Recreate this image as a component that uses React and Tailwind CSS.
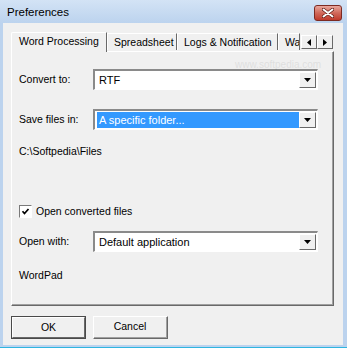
import React from "react";

const font = { fontFamily: '"Liberation Sans", Arial, sans-serif' };

function Arrow() {
  return (
    <svg width="7" height="4" viewBox="0 0 7 4">
      <path d="M0 0h7L3.5 4z" fill="#000" />
    </svg>
  );
}

function Combo({ text, selected }) {
  return (
    <div className="w-[225px] h-[21px] border-t-2 border-l-2 border-t-[#8a8a8a] border-l-[#8a8a8a] border-b border-r border-b-[#ffffff] border-r-[#ffffff] bg-white flex items-stretch p-[1px]">
      <div className="flex-1 flex items-center pl-[1px]">
        <div
          className={
            "h-[16px] w-full flex items-center pl-[2px] text-[11px] " +
            (selected ? "bg-[#3399ff] text-white" : "text-black")
          }
        >
          {text}
        </div>
      </div>
      <div className="w-[17px] bg-[#f0f0f0] border-t border-l border-t-[#ffffff] border-l-[#ffffff] border-b border-r border-b-[#696969] border-r-[#696969] flex items-center justify-center">
        <Arrow />
      </div>
    </div>
  );
}

function Button({ children, def }) {
  return (
    <div
      className={
        "w-[75px] h-[23px] flex " +
        (def ? "border border-[#4a4a4a]" : "border border-[#696969] border-t-[#ffffff] border-l-[#ffffff]")
      }
    >
      <div
        className={
          "flex-1 flex items-center justify-center text-[10.5px] text-black bg-[#f0f0f0] " +
          (def
            ? "border border-t-[#ffffff] border-l-[#ffffff] border-b-[#696969] border-r-[#696969]"
            : "border-b border-r border-b-[#a0a0a0] border-r-[#a0a0a0]")
        }
      >
        {children}
      </div>
    </div>
  );
}

function Tab({ children, w }) {
  return (
    <div
      className="h-[17px] flex items-center pl-[6px] pt-[1px] border-t border-l border-t-[#ffffff] border-l-[#ffffff] border-r border-r-[#696969] bg-[#f0f0f0] text-[10.5px] text-black whitespace-nowrap overflow-hidden"
      style={{ width: w }}
    >
      {children}
    </div>
  );
}

export default function App() {
  return (
    <div
      className="w-[347px] h-[348px] bg-[#bcd3ee] flex flex-col pl-[3px] pr-[4px] relative overflow-hidden"
      style={font}
    >
      {/* Title bar */}
      <div className="h-[23px] -ml-[3px] -mr-[4px] pl-[7px] pr-[5px] flex items-center justify-between bg-gradient-to-b from-[#d3e3f5] to-[#bcd3ee]">
        <span className="text-[11.5px] text-black mt-[3px]">Preferences</span>
        <div className="w-[28px] h-[16px] mt-[2px] rounded-[3px] border border-[#7c2a22] bg-gradient-to-b from-[#e9a79d] via-[#d0685a] to-[#c0392b] flex items-center justify-center">
          <svg width="12" height="10" viewBox="0 0 12 10">
            <path d="M1.5 1.5L10.5 8.5M10.5 1.5L1.5 8.5" stroke="#5a1a14" strokeWidth="3.4" strokeLinecap="round" />
            <path d="M1.5 1.5L10.5 8.5M10.5 1.5L1.5 8.5" stroke="#ffffff" strokeWidth="2" strokeLinecap="round" />
          </svg>
        </div>
      </div>

      {/* Client */}
      <div className="flex-1 bg-[#f0f0f0] flex flex-col pl-[8px] pr-[9px] pt-[9px] relative">
        {/* Tab strip */}
        <div className="h-[19px] flex items-end relative z-10">
          <div className="w-[96px] h-[20px] -mb-[1px] flex items-center pl-[7px] pb-[1px] border-t border-l border-t-[#ffffff] border-l-[#ffffff] border-r border-r-[#696969] bg-[#f0f0f0] text-[10.5px] text-black rounded-tl-[2px]">
            Word Processing
          </div>
          <div className="flex items-end mb-[1px]">
            <Tab w={70}>Spreadsheet</Tab>
            <Tab w={101}>Logs &amp; Notification</Tab>
            <Tab w={22}>Wa</Tab>
          </div>
          <div className="flex mb-[2px] ml-auto mr-[1px]">
            <div className="w-[16px] h-[14px] bg-[#f0f0f0] border border-t-[#ffffff] border-l-[#ffffff] border-b-[#696969] border-r-[#696969] flex items-center justify-center">
              <svg width="4" height="7" viewBox="0 0 4 7"><path d="M4 0v7L0 3.5z" fill="#000" /></svg>
            </div>
            <div className="w-[16px] h-[14px] bg-[#f0f0f0] border border-t-[#ffffff] border-l-[#ffffff] border-b-[#696969] border-r-[#696969] flex items-center justify-center">
              <svg width="4" height="7" viewBox="0 0 4 7"><path d="M0 0v7L4 3.5z" fill="#000" /></svg>
            </div>
          </div>
        </div>

        {/* Panel */}
        <div className="h-[255px] border-t border-l border-t-[#ffffff] border-l-[#ffffff] border-b border-r border-b-[#696969] border-r-[#696969] flex">
          <div className="flex-1 border-b border-r border-b-[#a0a0a0] border-r-[#a0a0a0] flex flex-col pl-[7px] pt-[17px] text-[10.5px] text-black">
            <div className="flex items-center h-[21px]">
              <span className="w-[74px]">Convert to:</span>
              <Combo text="RTF" />
            </div>
            <div className="flex items-center h-[21px] mt-[19px]">
              <span className="w-[74px]">Save files in:</span>
              <Combo text="A specific folder..." selected />
            </div>
            <div className="h-[14px] mt-[15px] flex items-center">C:\Softpedia\Files</div>
            <div className="flex items-center h-[13px] mt-[46px]">
              <div className="w-[13px] h-[13px] border border-t-[#7a7a7a] border-l-[#7a7a7a] border-b-[#ffffff] border-r-[#ffffff] bg-white flex items-center justify-center">
                <svg width="9" height="9" viewBox="0 0 9 9">
                  <path d="M1.5 4.2l2 2.3L7.5 2" stroke="#000" strokeWidth="1.7" fill="none" />
                </svg>
              </div>
              <span className="ml-[4px]">Open converted files</span>
            </div>
            <div className="flex items-center h-[21px] mt-[13px]">
              <span className="w-[74px]">Open with:</span>
              <Combo text="Default application" />
            </div>
            <div className="h-[14px] mt-[17px] flex items-center">WordPad</div>
          </div>
        </div>

        {/* Buttons */}
        <div className="flex gap-[7px] mt-[10px]">
          <Button def>OK</Button>
          <Button>Cancel</Button>
        </div>

        <div className="absolute left-[232px] top-[34px] text-[10px] text-[#000000] opacity-[0.07] pointer-events-none">
          www.softpedia.com
        </div>
      </div>
      <div className="absolute left-0 right-0 bottom-0 h-[1px] bg-[#2fb5e0]" />
      <div className="h-[3px]" />
    </div>
  );
}
